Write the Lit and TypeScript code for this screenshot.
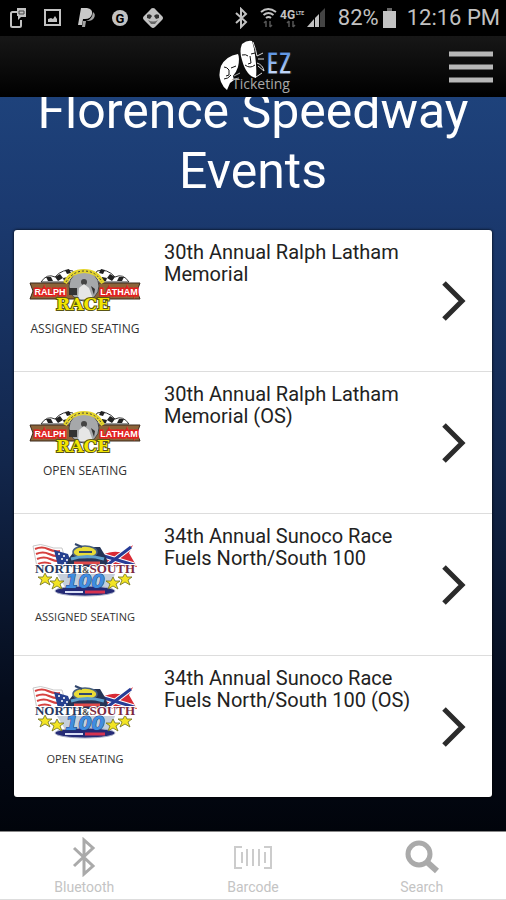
import { LitElement, html, svg, css } from "lit";
import { customElement, property } from "lit/decorators.js";

interface EventItem {
  title: string;
  seating: string;
  logo: "latham" | "northsouth";
}

const EVENTS: EventItem[] = [
  { title: "30th Annual Ralph Latham Memorial", seating: "ASSIGNED SEATING", logo: "latham" },
  { title: "30th Annual Ralph Latham Memorial (OS)", seating: "OPEN SEATING", logo: "latham" },
  { title: "34th Annual Sunoco Race Fuels North/South 100", seating: "ASSIGNED SEATING", logo: "northsouth" },
  { title: "34th Annual Sunoco Race Fuels North/South 100 (OS)", seating: "OPEN SEATING", logo: "northsouth" },
];

const lathamLogo = html`
  <svg viewBox="0 0 112 44" width="112" height="44" role="img" aria-label="Ralph Latham Race">
    <path d="M12 14 Q18 5 26 9 Q34 0 44 3 L48 14 Z M100 14 Q94 5 86 9 Q78 0 68 3 L64 14 Z" fill="#fff" stroke="#333" stroke-width="1" />
    <path d="M17 9l5 0 2 4-5 0zM26 9l5-3 3 4-5 3zM36 2l4-1 2 4-4 1zM34 10l5-1 1 4-5 0zM43 4l5 2-2 4zM95 9l-5 0-2 4 5 0zM86 9l-5-3-3 4 5 3zM76 2l-4-1-2 4 4 1zM78 10l-5-1-1 4 5 0z" fill="#222" />
    <path d="M1 15H111L108 23L111 31H1L4 23Z" fill="#8c6338" stroke="#3b2a1c" />
    <circle cx="55" cy="18" r="15" fill="#a6a8aa" stroke="#444" />
    <path d="M36 15 Q42 3 55 3 Q68 3 74 15" fill="none" stroke="#e5d52c" stroke-width="4" />
    <path d="M37 14 Q44 3 55 3 Q67 3 73 14" fill="none" stroke="#444" stroke-width="1" stroke-dasharray="2 2" />
    <circle cx="55" cy="14" r="3" fill="#444" />
    <path d="M49 31l1-11 5-4 5 4 4 11z" fill="#e6e6e6" />
    <path d="M40 20h8v7h-8zM62 18l4 3-1 6z" fill="#333" />
    <text class="wing" x="21" y="27">RALPH</text>
    <text class="wing" x="90" y="27">LATHAM</text>
    <text class="race" x="54" y="42">RACE</text>
  </svg>
`;

const star = (x: number, y: number) => svg`
  <path transform="translate(${x} ${y})" d="M0-6l2 4 5 0-4 3 2 5-5-3-5 3 2-5-4-3 5 0z" fill="#f3e423" stroke="#6f7020" stroke-width=".8" />
`;

const northSouthLogo = html`
  <svg viewBox="0 0 106 54" width="106" height="54" role="img" aria-label="North South 100">
    <path d="M1 3q8-3 14 0t15 2l5 18-30 1z" fill="#fff" stroke="#bbb" stroke-width=".8" />
    <path d="M3 6q7-3 13 0t12 2M4 11q7-3 13 0t12 2M5 16q7-3 13 0t12 2M6 21q7-3 13 0" fill="none" stroke="#d6413f" stroke-width="2" />
    <path d="M22 7l14 4 5 13-15-1z" fill="#26408f" />
    <path d="M26 11h2M31 13h2M29 16h2M34 17h2M32 20h2" stroke="#fff" stroke-width="1.5" />
    <path d="M70 12q10-4 16-3t15-7l-4 8 8 14H76z" fill="#d92a35" />
    <path d="M72 13l30 9M74 23l25-19" stroke="#fff" stroke-width="5" />
    <path d="M72 13l30 9M74 23l25-19" stroke="#273c96" stroke-width="3" />
    <path d="M37 15L46 4l22 0 6 10 3 10H34z" fill="#253456" />
    <ellipse cx="53" cy="9" rx="12" ry="6" fill="#e9dc36" stroke="#486080" stroke-width="1.5" />
    <path d="M43 1l7 3M47 9h13" stroke="#31466d" stroke-width="2" />
    <path d="M39 16q16-5 33 0" fill="none" stroke="#5fa0cc" stroke-width="3" />
    <path d="M42 20h26" stroke="#df4b4b" stroke-width="3" />
    <path d="M25 31h58l-6 15H34z" fill="#c5cfdb" />
    <ellipse cx="53" cy="48" rx="30" ry="5" fill="#252b76" stroke="#aab0c8" />
    <path d="M33 49h18" stroke="#d9dff6" stroke-width="2" />
    <path d="M53 49h20" stroke="#d63250" stroke-width="3" />
    ${star(13, 36)}${star(25, 40)}${star(81, 40)}${star(93, 36)}
    <text class="place" x="53" y="30"><tspan class="navy">NORTH</tspan><tspan class="amp">&amp;</tspan><tspan class="maroon">SOUTH</tspan></text>
    <text class="hundred" x="53" y="45">100</text>
  </svg>
`;

@customElement("status-bar")
class StatusBar extends LitElement {
  static styles = css`
    :host {
      display: flex;
      align-items: center;
      justify-content: space-between;
      height: 36px;
      padding: 0 6px 0 8px;
      background: #000;
      color: #c2c2c2;
      font: 22px/36px Roboto, sans-serif;
    }
    .group { display: flex; align-items: center; }
    .notices { gap: 12px; }
    .radio { gap: 10px; margin-right: 10px; }
    .battery { margin: 0 11px 0 4px; }
    svg { display: block; }
    .net { font: bold 12px Roboto, sans-serif; fill: #c2c2c2; }
    .netsub { font: bold 5px Roboto, sans-serif; fill: #c2c2c2; }
    .g { font: bold 13px Roboto, sans-serif; fill: #000; text-anchor: middle; }
  `;

  render() {
    return html`
      <div class="group notices">
        <svg width="20" height="22" viewBox="0 0 20 22">
          <path d="M10 5H4.500Q3 5 3 6.500V18.500Q3 20 4.500 20H11.500Q13 20 13 18.500V13" fill="none" stroke="#c2c2c2" stroke-width="2" />
          <path d="M9 1h9v9h-5l-3 3V9H9z" fill="#c2c2c2" />
          <path d="M11 4h5v3h-5z" fill="none" stroke="#444" />
        </svg>
        <svg width="24" height="22" viewBox="0 0 24 22">
          <rect x="5" y="3" width="15" height="15" fill="none" stroke="#c2c2c2" stroke-width="2" />
          <path d="M8 15v-3l3-1 2 1 2-3 2 3v3z" fill="#c2c2c2" />
        </svg>
        <svg width="20" height="22" viewBox="0 0 20 22">
          <path d="M5 1h6q6 1 5 6-1 5-7 5H7l-1 6H2z" fill="#c9c9c9" />
          <path d="M17 5q3 2 1 6-2 3-6 3h-2l-1 6H6l1-6h3q6-1 7-9z" fill="#a4a4a4" />
        </svg>
        <svg width="22" height="22" viewBox="0 0 22 22">
          <circle cx="12" cy="11" r="8" fill="#c2c2c2" />
          <text class="g" x="12" y="16">G</text>
        </svg>
        <svg width="22" height="22" viewBox="0 0 22 22">
          <path d="M11 1q2 0 3 2l6 6q2 2 0 4l-7 7q-2 2-4 0l-7-7q-2-2 0-4l6-6q1-2 3-2z" fill="#c2c2c2" />
          <path d="M5 8q3-2 5 1l-2 3-3-1zM17 8q-3-2-5 1l2 3 3-1z" fill="#333" />
          <path d="M6 13q5 3 10 0l-3 4H9z" fill="#666" />
        </svg>
      </div>
      <div class="group">
        <div class="group radio">
          <svg width="16" height="22" viewBox="0 0 16 22">
            <path d="M2 6l10 9-5 5V2l5 5-10 9" fill="none" stroke="#c2c2c2" stroke-width="2" />
          </svg>
          <svg width="68" height="22" viewBox="0 0 68 22">
            <path d="M1 5q7-6 15 0M3.500 8q5-4 10 0M6 11q2.500-2 5 0" fill="none" stroke="#c2c2c2" stroke-width="2" />
            <path d="M6 14v6M10 14v6M4 16l2-2M12 18l-2 2M29 14v6M33 14v6M27 16l2-2M35 18l-2 2" stroke="#555" stroke-width="1.500" />
            <text class="net" x="20" y="12">4G</text>
            <text class="netsub" x="36" y="8">LTE</text>
            <path d="M65 1v19h-5V6z" fill="#444" />
            <path d="M54 12v8h-7zM55 11l4-4v13h-4z" fill="#c2c2c2" />
          </svg>
        </div>
        <span>82%</span>
        <svg class="battery" width="13" height="22" viewBox="0 0 13 22">
          <path d="M4 1h5v3h4v17H0V4h4z" fill="#c2c2c2" />
          <path d="M4 1h5v3H4z" fill="#666" />
        </svg>
        <span>12:16 PM</span>
      </div>
    `;
  }
}

@customElement("event-row")
class EventRow extends LitElement {
  @property({ attribute: false }) item!: EventItem;

  static styles = css`
    :host { display: block; }
    .row {
      display: grid;
      grid-template-columns: 110px 1fr 24px;
      column-gap: 24px;
      min-height: 141px;
      box-sizing: border-box;
      padding: 11px 26px 10px 16px;
      color: #222;
      text-decoration: none;
    }
    .art {
      display: flex;
      flex-direction: column;
      align-items: center;
      gap: 9px;
      padding-top: 27px;
    }
    .art.tall { gap: 12px; padding-top: 18px; }
    .art svg { flex: none; overflow: visible; }
    .seating { font: 12px/16px "Open Sans", sans-serif; white-space: nowrap; color: #333; }
    .tall .seating { font-size: 11px; }
    .title { margin: 0; font: 20px/22px Roboto, sans-serif; }
    .chevron { align-self: center; }
    text { text-anchor: middle; }
    .wing { font: bold 9px "Liberation Sans", sans-serif; fill: #fff; stroke: #e3201f; stroke-width: 3px; paint-order: stroke; }
    .race { font: bold 17px "DejaVu Serif", serif; fill: #f2e600; stroke: #5a5614; stroke-width: 2px; paint-order: stroke; }
    .place { font: bold 13px "Liberation Serif", serif; stroke: #fff; stroke-width: 2px; paint-order: stroke; }
    .navy { fill: #263760; }
    .amp { font-size: 9px; fill: #444; }
    .maroon { fill: #7c2840; }
    .hundred { font: italic bold 19px "DejaVu Sans", sans-serif; fill: #3f8de0; stroke: #1d3c73; stroke-width: 1px; paint-order: stroke; }
  `;

  render() {
    const tall = this.item.logo === "northsouth";
    return html`
      <a class="row" href="#">
        <div class="art ${tall ? "tall" : ""}">
          ${tall ? northSouthLogo : lathamLogo}
          <span class="seating">${this.item.seating}</span>
        </div>
        <h2 class="title">${this.item.title}</h2>
        <svg class="chevron" width="24" height="40" viewBox="0 0 24 40" aria-hidden="true">
          <path d="M2 2L20 20L2 38" fill="none" stroke="#2b2b2b" stroke-width="5" />
        </svg>
      </a>
    `;
  }
}

@customElement("app-root")
class AppRoot extends LitElement {
  static styles = css`
    :host {
      display: flex;
      flex-direction: column;
      min-height: 100vh;
      font-family: Roboto, sans-serif;
      background: #fff;
    }
    .header {
      display: grid;
      grid-template-columns: 1fr auto 1fr;
      align-items: center;
      height: 61px;
      padding: 0 13px;
      background: linear-gradient(#171717, #000);
    }
    .brand { grid-column: 2; display: block; }
    .brand svg, .menu svg { display: block; overflow: visible; }
    .menu { justify-self: end; padding: 0; border: 0; background: none; }
    .ez { font: 300 30px "Open Sans Condensed", "Open Sans", sans-serif; fill: url(#ez); stroke: #0c0c0c; stroke-width: 1px; }
    .ticketing { font: 14px "Open Sans", sans-serif; fill: #a8a8a8; }
    .content {
      flex: 1;
      overflow: hidden;
      padding: 0 14px 34px;
      background: linear-gradient(#1e427b, #1b3a70 15%, #12264b 50%, #050c1b 82%, #01040b);
    }
    .heading {
      margin: -16px 0 29px;
      color: #fff;
      font: 400 50px/60px Roboto, sans-serif;
      text-align: center;
    }
    .list {
      margin: 0;
      padding: 0;
      list-style: none;
      border-radius: 3px;
      background: #fff;
      box-shadow: 0 0 3px #000;
    }
    .list li + li { border-top: 1px solid #ddd; }
    .tabs {
      display: grid;
      grid-template-columns: repeat(3, 1fr);
      height: 67px;
      border-top: 1px solid #888;
      border-bottom: 1px solid #ddd;
      background: #fff;
    }
    .tab {
      display: flex;
      flex-direction: column;
      align-items: center;
      padding: 5px 0 0;
      border: 0;
      background: none;
      color: #c4c4c4;
      font: 14px/20px Roboto, sans-serif;
    }
  `;

  render() {
    return html`
      <status-bar></status-bar>
      <header class="header">
        <a class="brand" href="#" aria-label="EZ Ticketing">
          <svg width="72" height="56" viewBox="0 0 72 56">
            <defs>
              <linearGradient id="ez" x1="0" y1="0" x2="0" y2="1">
                <stop offset="0.2" stop-color="#4f8be0" />
                <stop offset="0.9" stop-color="#dfeaff" />
              </linearGradient>
            </defs>
            <path d="M21 15q2 4 0 13-2 6-5 9l1 4-4 3-3 7Q6 48 4 43 1 36 4 27 9 17 21 15z" fill="#fff" />
            <path d="M7 28q3 0 5 3M14 29l5-2M12 31v5l-3 1M7 40q4 0 7-4" stroke="#111" fill="none" />
            <path d="M25 5q5-4 10-3 2 6 3 14 2 13 1 23-5-1-8-5-4-5-6-13-3-9 0-16z" fill="#fff" />
            <path d="M25 16q4-1 6 1M34 15l4-1M33 17l1 7-3 1M28 26q5 4 10 0" stroke="#111" fill="none" />
            <path d="M36 3q3 8 4 14l6-3M41 20l6 0M40 24q6 2 7 8l-6-5M39 38l6-4" stroke="#ddd" fill="none" />
            <path d="M17 37l6-3M17 40l5-1" stroke="#aaa" />
            <text class="ez" x="49" y="35">EZ</text>
            <text class="ticketing" x="15" y="50">Ticketing</text>
          </svg>
        </a>
        <button class="menu" aria-label="Menu">
          <svg width="44" height="32" viewBox="0 0 44 32">
            <path d="M0 3h44M0 16h44M0 29h44" stroke="#b8b8b8" stroke-width="5" />
          </svg>
        </button>
      </header>
      <main class="content">
        <h1 class="heading">Florence Speedway Events</h1>
        <ul class="list">
          ${EVENTS.map((item) => html`<li><event-row .item=${item}></event-row></li>`)}
        </ul>
      </main>
      <nav class="tabs">
        <button class="tab">
          <svg width="24" height="40" viewBox="0 0 24 40">
            <path d="M2 11l19 18-9 8V3l9 8L2 29" fill="none" stroke="#aaa" stroke-width="3" />
          </svg>
          Bluetooth
        </button>
        <button class="tab">
          <svg width="40" height="40" viewBox="0 0 40 40">
            <path d="M9 10H2v21h7M31 10h7v21h-7" fill="none" stroke="#ccc" stroke-width="2" />
            <path d="M9 15v11M14 12v17M20 12v17M26 12v17M32 15v11" stroke="#ccc" stroke-width="2" />
          </svg>
          Barcode
        </button>
        <button class="tab">
          <svg width="36" height="40" viewBox="0 0 36 40">
            <circle cx="15" cy="17" r="11" fill="none" stroke="#aaa" stroke-width="5" />
            <path d="M23 25l10 9" stroke="#aaa" stroke-width="6" />
          </svg>
          Search
        </button>
      </nav>
    `;
  }
}
